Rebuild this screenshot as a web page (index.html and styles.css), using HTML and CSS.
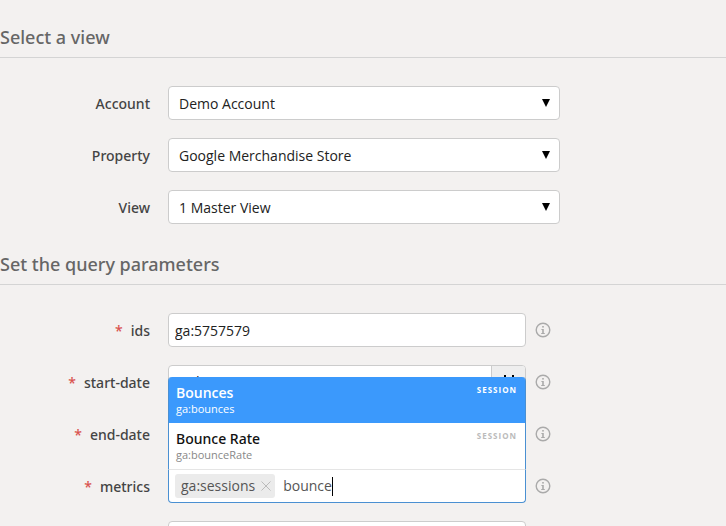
FILE: index.html
```html
<!DOCTYPE html>
<html lang="en">

<head>
    <meta charset="UTF-8">
    <meta name="viewport" content="width=device-width, initial-scale=1.0">
    <title>Query Explorer</title>
    <link rel="stylesheet" href="styles.css">
</head>

<body>
    <svg width="0" height="0" class="sprite" aria-hidden="true">
        <symbol id="info" viewBox="0 0 16 16">
            <circle cx="8" cy="8" r="6.8" fill="none" stroke="currentColor" stroke-width="1.4" />
            <rect x="7.2" y="4" width="1.6" height="1.6" fill="currentColor" />
            <path d="M6.4 7h2.4v4h1v1H6.2v-1h1V8h-.8z" fill="currentColor" />
        </symbol>
        <symbol id="calendar" viewBox="0 0 14 14">
            <path d="M1 3h12v10H1zM2 6h10M3 0v3M11 0v3" fill="none" stroke="#000" stroke-width="2" />
        </symbol>
    </svg>

    <form class="query-form">
        <section>
            <h2>Select a view</h2>
            <div class="rows">
                <div class="row">
                    <label for="account">Account</label>
                    <div class="select-box">
                        <select id="account">
                            <option>Demo Account</option>
                        </select>
                    </div>
                </div>
                <div class="row">
                    <label for="property">Property</label>
                    <div class="select-box">
                        <select id="property">
                            <option>Google Merchandise Store</option>
                        </select>
                    </div>
                </div>
                <div class="row">
                    <label for="view">View</label>
                    <div class="select-box">
                        <select id="view">
                            <option>1 Master View</option>
                        </select>
                    </div>
                </div>
            </div>
        </section>

        <section>
            <h2>Set the query parameters</h2>
            <div class="rows">
                <div class="row">
                    <label for="ids"><span class="required">*</span>ids</label>
                    <div class="control">
                        <input class="field" type="text" id="ids" value="ga:5757579">
                        <a class="info" href="#ids" aria-label="About ids"><svg><use href="#info" /></svg></a>
                    </div>
                </div>
                <div class="row">
                    <label for="start-date"><span class="required">*</span>start-date</label>
                    <div class="control">
                        <div class="field date-field">
                            <input type="text" id="start-date" value="30daysAgo">
                            <button type="button" aria-label="Pick start date"><svg><use href="#calendar" /></svg></button>
                        </div>
                        <a class="info" href="#start-date" aria-label="About start-date"><svg><use href="#info" /></svg></a>
                    </div>
                </div>
                <div class="row">
                    <label for="end-date"><span class="required">*</span>end-date</label>
                    <div class="control">
                        <div class="field date-field">
                            <input type="text" id="end-date" value="yesterday">
                            <button type="button" aria-label="Pick end date"><svg><use href="#calendar" /></svg></button>
                        </div>
                        <a class="info" href="#end-date" aria-label="About end-date"><svg><use href="#info" /></svg></a>
                    </div>
                </div>
                <div class="row">
                    <label for="metrics"><span class="required">*</span>metrics</label>
                    <div class="control">
                        <div class="field tag-field">
                            <ul class="suggestions">
                                <li class="active">
                                    <div class="suggestion-head">
                                        <span class="name">Bounces</span>
                                        <span class="group">SESSION</span>
                                    </div>
                                    <div class="key">ga:bounces</div>
                                </li>
                                <li>
                                    <div class="suggestion-head">
                                        <span class="name">Bounce Rate</span>
                                        <span class="group">SESSION</span>
                                    </div>
                                    <div class="key">ga:bounceRate</div>
                                </li>
                            </ul>
                            <span class="tag">ga:sessions
                                <button type="button" aria-label="Remove ga:sessions">
                                    <svg width="10" height="10" viewBox="0 0 10 10">
                                        <path d="M.5.5l9 9M9.5.5l-9 9" stroke="#bbb" fill="none" />
                                    </svg>
                                </button>
                            </span>
                            <input type="text" id="metrics" value="bounce">
                        </div>
                        <a class="info" href="#metrics" aria-label="About metrics"><svg><use href="#info" /></svg></a>
                    </div>
                </div>
                <div class="row">
                    <span></span>
                    <div class="control">
                        <input class="field" type="text" aria-label="dimensions">
                        <a class="info" href="#dimensions" aria-label="About dimensions"></a>
                    </div>
                </div>
            </div>
        </section>
    </form>
</body>

</html>
```
FILE: styles.css
```css
* {
    box-sizing: border-box;
}

body {
    font-family: "Open Sans", "Noto Sans", sans-serif;
    font-size: 14px;
    line-height: 20px;
    background-color: #f3f1f0;
    color: #222;
    margin: 0;
    height: 100vh;
    overflow: hidden;
}

input,
select,
button {
    font: inherit;
    color: inherit;
}

.sprite {
    position: absolute;
}

.query-form {
    padding-top: 25px;
}

h2 {
    margin: 0;
    padding-bottom: 7px;
    border-bottom: 1px solid #d4d4d4;
    color: #666;
    font-family: "Noto Sans", "Open Sans", sans-serif;
    font-size: 18px;
    font-weight: 500;
    line-height: 25px;
}

.rows {
    display: flex;
    flex-direction: column;
    gap: 18px;
    padding: 28px 0;
}

.row {
    display: grid;
    grid-template-columns: 150px minmax(0, 392px);
    column-gap: 18px;
    align-items: center;
}

.row label {
    padding-top: 1px;
    text-align: right;
    color: #444;
    font-family: "Noto Sans", "Open Sans", sans-serif;
    font-weight: 500;
}

.required {
    color: #d9534f;
    margin-right: 8px;
}

.select-box {
    position: relative;
}

.select-box::after {
    content: "";
    position: absolute;
    right: 10px;
    top: 13px;
    width: 8px;
    height: 8px;
    background-color: #000;
    clip-path: polygon(0 0, 100% 0, 50% 100%);
    pointer-events: none;
}

.select-box select {
    appearance: none;
    display: block;
    width: 100%;
    height: 34px;
    padding: 2px 30px 0 10px;
    background-color: #fff;
    border: 1px solid #ccc;
    border-radius: 4px;
}

.control {
    display: flex;
    align-items: center;
    gap: 9px;
    padding-right: 9px;
}

.field {
    flex: 1;
    min-width: 0;
    height: 34px;
    padding: 0 6px;
    background-color: #fff;
    border: 1px solid #ccc;
    border-radius: 4px;
}

.info {
    width: 16px;
    height: 16px;
    color: #aaa;
}

.info svg {
    display: block;
    width: 16px;
    height: 16px;
}

.date-field {
    display: flex;
    padding: 0;
    overflow: hidden;
}

.date-field input {
    flex: 1;
    min-width: 0;
    padding: 0 6px;
    border: 0;
    background: none;
}

.date-field button {
    display: flex;
    align-items: center;
    justify-content: center;
    width: 34px;
    padding: 0;
    border: 0;
    border-left: 1px solid #ccc;
    background-color: #eee;
}

.date-field svg {
    width: 14px;
    height: 14px;
}

/* metrics box with its suggestion list opening upwards */
.tag-field {
    position: relative;
    display: flex;
    align-items: center;
    gap: 8px;
    border-color: #4a90d2;
    border-top-color: #fff;
    border-radius: 0 0 4px 4px;
}

.tag {
    display: flex;
    align-items: center;
    gap: 6px;
    height: 24px;
    padding: 0 4px 0 6px;
    background-color: #ebebeb;
    border-radius: 3px;
    color: #555;
}

.tag button {
    display: flex;
    padding: 0;
    border: 0;
    background: none;
}

.tag-field input {
    field-sizing: content;
    height: 19px;
    padding: 0;
    border: 0;
    border-right: 1px solid #000;
    background: none;
    color: #555;
    outline: 0;
}

.suggestions {
    position: absolute;
    left: -1px;
    right: -1px;
    bottom: 100%;
    margin: 0;
    padding: 0;
    list-style: none;
    background-color: #fff;
    border: 1px solid #4a90d2;
    border-top: 0;
    border-bottom: 1px solid #e5e5e5;
    border-radius: 4px 4px 0 0;
}

.suggestions li {
    height: 46px;
    padding: 6px 8px 4px 7px;
    color: #111;
}

.suggestions .active {
    background-color: #3b99fc;
    border-radius: 3px 3px 0 0;
    color: #fff;
}

.suggestion-head {
    display: flex;
    justify-content: space-between;
    line-height: 19px;
}

.name {
    font-family: "Noto Sans", "Open Sans", sans-serif;
    font-weight: 500;
}

.active .name {
    font-family: inherit;
    font-weight: 600;
}

.group {
    color: #bbb;
    font-size: 8px;
    font-weight: 700;
    letter-spacing: 1px;
    line-height: 14px;
}

.key {
    color: #888;
    font-size: 11px;
    line-height: 14px;
}

.active .group,
.active .key {
    color: #fff;
}
```
